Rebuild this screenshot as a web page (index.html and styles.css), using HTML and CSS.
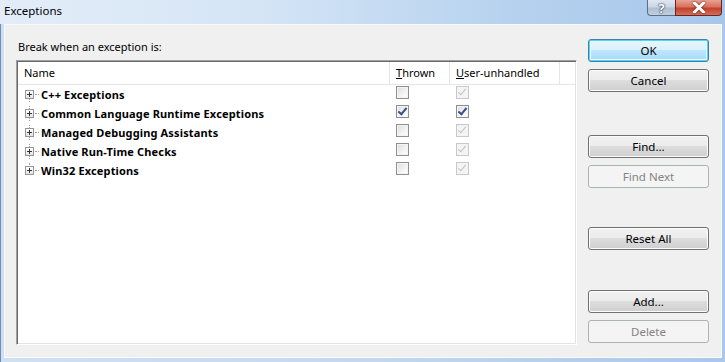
FILE: index.html
```html
<!DOCTYPE html>
<html>
<head>
  <meta charset="utf-8">
  <title>Exceptions</title>
  <link rel="stylesheet" href="styles.css">
</head>
<body>
  <div class="window">
    <div class="titlebar">
      <span class="title">Exceptions</span>
      <div class="caption-btns">
        <span class="cap help">?</span>
        <span class="cap close">
          <svg width="14" height="11" viewBox="0 0 14 11"><path d="M2.5 1 L11.5 10 M11.5 1 L2.5 10" stroke="#fff" stroke-width="3" stroke-linecap="square"/></svg>
        </span>
      </div>
    </div>

    <div class="client">
      <div class="main">
        <div class="label">Break when an exception is:</div>
        <div class="listbox">
          <div class="header">
            <div class="hcol name">Name</div>
            <div class="hcol thrown"><u>T</u>hrown</div>
            <div class="hcol user"><u>U</u>ser-unhandled</div>
            <div class="hcol rest"></div>
          </div>
          <div class="rows">
            <div class="row">
              <div class="cell name"><span class="exp"></span><span class="dots"></span><b>C++ Exceptions</b></div>
              <div class="cell"><span class="chk"></span></div>
              <div class="cell"><span class="chk dis on"></span></div>
            </div>
            <div class="row">
              <div class="cell name"><span class="exp"></span><span class="dots"></span><b>Common Language Runtime Exceptions</b></div>
              <div class="cell"><span class="chk on"></span></div>
              <div class="cell"><span class="chk on"></span></div>
            </div>
            <div class="row">
              <div class="cell name"><span class="exp"></span><span class="dots"></span><b>Managed Debugging Assistants</b></div>
              <div class="cell"><span class="chk"></span></div>
              <div class="cell"><span class="chk dis on"></span></div>
            </div>
            <div class="row">
              <div class="cell name"><span class="exp"></span><span class="dots"></span><b>Native Run-Time Checks</b></div>
              <div class="cell"><span class="chk"></span></div>
              <div class="cell"><span class="chk dis on"></span></div>
            </div>
            <div class="row last">
              <div class="cell name"><span class="exp"></span><span class="dots"></span><b>Win32 Exceptions</b></div>
              <div class="cell"><span class="chk"></span></div>
              <div class="cell"><span class="chk dis on"></span></div>
            </div>
          </div>
        </div>
      </div>

      <div class="buttons">
        <button class="btn default">OK</button>
        <button class="btn">Cancel</button>
        <button class="btn gap-find">Find...</button>
        <button class="btn" disabled>Find Next</button>
        <button class="btn gap-reset">Reset All</button>
        <button class="btn gap-add">Add...</button>
        <button class="btn" disabled>Delete</button>
      </div>
    </div>
  </div>
</body>
</html>
```

FILE: styles.css
```css
html, body { margin: 0; padding: 0; }

body {
  width: 725px;
  height: 362px;
  overflow: hidden;
  font-family: "Noto Sans", "Open Sans", sans-serif;
  font-size: 11px;
  color: #000;
}

.window {
  width: 725px;
  height: 362px;
  box-sizing: border-box;
  padding: 0 3px 4px 3px;
  display: flex;
  flex-direction: column;
  background: linear-gradient(90deg, #cfe0f3 0%, #c3d8f0 50%, #a9c8ea 100%);
  border-left: 1px solid #6d8fb6;
}

/* title bar */
.titlebar {
  height: 24px;
  display: flex;
  align-items: flex-start;
  background: linear-gradient(90deg, #e3edf8 0%, #d5e5f6 35%, #b7d2ef 70%, #a6c6ea 100%);
  margin: 0 -3px 0 -4px;
  padding: 0 3px 0 4px;
}

.title {
  font-size: 11.5px;
  line-height: 22px;
  color: #000;
}

.caption-btns {
  margin-left: auto;
  display: flex;
}

.cap {
  height: 16px;
  box-sizing: border-box;
  border: 1px solid #5d6d82;
  border-top: none;
  display: flex;
  align-items: center;
  justify-content: center;
}

.help {
  width: 28px;
  border-radius: 0 0 0 4px;
  border-right: none;
  background: linear-gradient(#dfe7f0 0%, #cbd7e5 45%, #aebfd2 55%, #c1d0df 100%);
  color: #fff;
  font-weight: bold;
  font-size: 13px;
  line-height: 14px;
  text-shadow: 0 0 1px #33465e, 0 0 2px #33465e, 0 0 1px #33465e;
}

.close {
  width: 47px;
  border-radius: 0 0 4px 0;
  border-color: #6b2520;
  background: linear-gradient(#e8a393 0%, #d9715d 45%, #c4402b 55%, #d0705c 100%);
}

.close svg { filter: drop-shadow(0 0 1px #5a1a12); }

/* client area */
.client {
  flex: 1;
  display: flex;
  gap: 11px;
  background: #f0f0f0;
  border: 1px solid #fafafa;
  padding: 14px 12px 12px 11px;
}

.main {
  display: flex;
  flex-direction: column;
  width: 564px;
}

.label {
  line-height: 15px;
  margin: 0 0 6px 2px;
}

.listbox {
  flex: 1;
  background: #fff;
  border-top: 1px solid #a0a0a0;
  border-left: 1px solid #a0a0a0;
  border-right: 1px solid #fff;
  border-bottom: 1px solid #fff;
  box-shadow: inset 1px 1px 0 #696969, inset -1px -1px 0 #e3e3e3;
  padding: 1px;
}

.header {
  display: grid;
  grid-template-columns: 372px 60px 110px 1fr;
  height: 22px;
  border-bottom: 1px solid #e5e5e5;
}

.hcol {
  line-height: 21px;
  border-right: 1px solid #e5e5e5;
  padding-left: 6px;
}

.hcol.rest { border-right: none; }

.row {
  display: grid;
  grid-template-columns: 372px 60px 110px;
  height: 19px;
  align-items: center;
}

.cell { display: flex; padding-left: 6px; }

.cell.name {
  align-items: center;
  padding-left: 7px;
  position: relative;
}

.cell.name b { letter-spacing: 0.15px; }

/* dotted tree line */
.row .cell.name::before {
  content: "";
  position: absolute;
  left: 11px;
  top: 0;
  bottom: 0;
  border-left: 1px dotted #a0a0a0;
}
.row:first-child .cell.name::before { top: 50%; }
.row.last .cell.name::before { bottom: 50%; }

.exp {
  width: 9px;
  height: 9px;
  box-sizing: border-box;
  border: 1px solid #969696;
  background: linear-gradient(#fff, #e4e4e4);
  position: relative;
  z-index: 1;
}
.exp::before {
  content: "";
  position: absolute;
  left: 1px; top: 3px;
  width: 5px; height: 1px;
  background: #333;
}
.exp::after {
  content: "";
  position: absolute;
  left: 3px; top: 1px;
  width: 1px; height: 5px;
  background: #333;
}

.dots {
  width: 4px;
  border-top: 1px dotted #a0a0a0;
  margin: 0 2px 0 1px;
}

.chk {
  width: 13px;
  height: 13px;
  box-sizing: border-box;
  border: 1px solid #8e8f8f;
  background: linear-gradient(135deg, #dcdcdc 0%, #f4f4f4 60%, #fff 100%);
  box-shadow: inset 0 0 0 1px #f4f4f4;
  position: relative;
  margin-top: -4px;
}

.chk.dis {
  border-color: #c8c8c8;
  background: #f4f4f4;
}

.chk.on::after {
  content: "";
  position: absolute;
  left: 3px;
  top: 0;
  width: 3px;
  height: 7px;
  border: solid #3c4f86;
  border-width: 0 2px 2px 0;
  transform: rotate(40deg);
}

.chk.dis.on::after {
  border-color: #c2c2c2;
  border-width: 0 1px 1px 0;
}

/* buttons */
.buttons {
  display: flex;
  flex-direction: column;
  width: 121px;
  gap: 7px;
}

.btn {
  font: inherit;
  font-size: 11.5px;
  height: 23px;
  width: 121px;
  padding: 0;
  border: 1px solid #707070;
  border-radius: 3px;
  background: linear-gradient(#f2f2f2 0%, #ebebeb 49%, #dddddd 50%, #cfcfcf 100%);
  box-shadow: inset 0 0 0 1px #fcfcfc;
  color: #000;
}

.btn.default {
  border-color: #3c7fb1;
  box-shadow: inset 0 0 0 1px #48d8fb, inset 0 0 0 2px #f4fbfe;
  background: linear-gradient(#eaf6fd 0%, #d9f0fc 49%, #bee6fd 50%, #a7d9f5 100%);
}

.btn:disabled {
  border-color: #adb2b5;
  background: #f4f4f4;
  box-shadow: none;
  color: #838383;
}

.gap-find { margin-top: 36px; }
.gap-reset { margin-top: 32px; }
.gap-add { margin-top: 33px; }
```
